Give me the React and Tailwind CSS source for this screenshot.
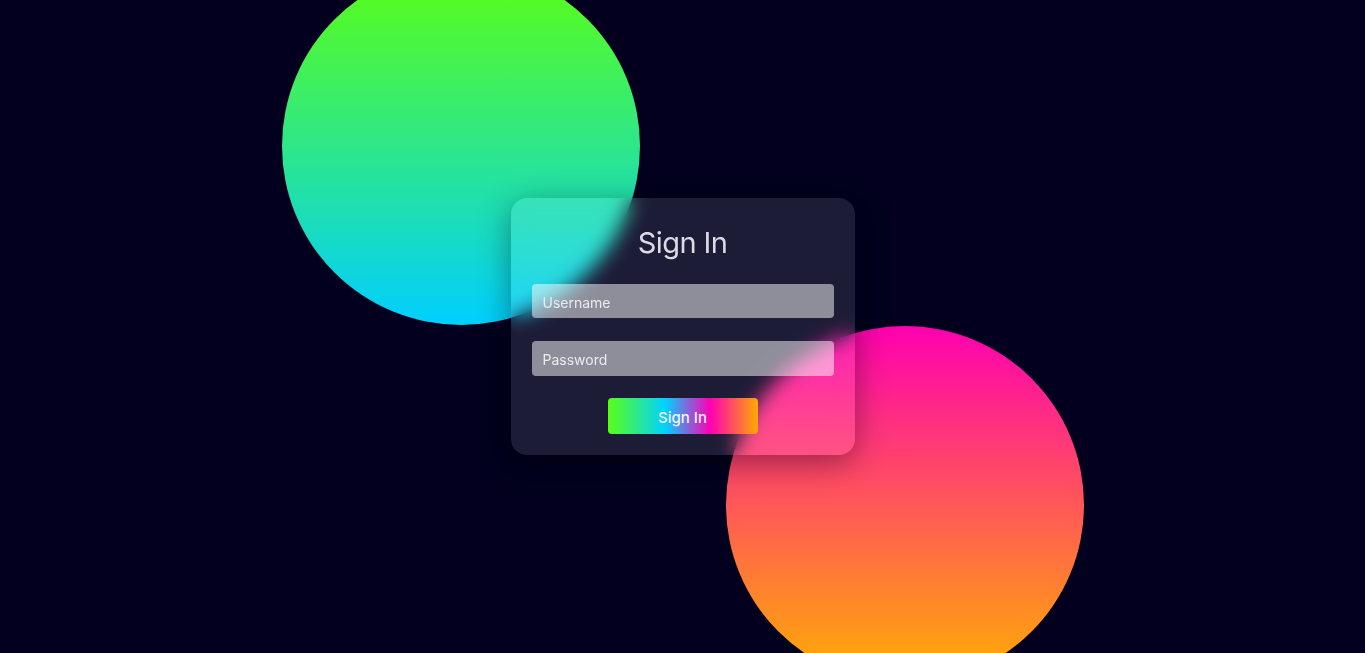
import { useState } from 'react';

export default function App() {
  const [username, setUsername] = useState('');
  const [password, setPassword] = useState('');

  return (
    <div className="relative w-full min-h-[653px] h-screen overflow-hidden bg-[#02001e] flex items-center justify-center font-['Inter','Noto_Sans',sans-serif]">
      {/* decorative circles */}
      <div className="absolute left-[282px] top-[-33px] w-[358px] h-[358px] rounded-full bg-[linear-gradient(#5cff12,#00cfff)]"></div>
      <div className="absolute left-[726px] top-[326px] w-[358px] h-[358px] rounded-full bg-[linear-gradient(#ff00b0,#ffb000)]"></div>

      <div className="relative z-10 w-[344px] rounded-[16px] bg-white/[0.11] backdrop-blur-[10px] shadow-[0_8px_32px_rgba(0,0,0,0.4)] px-[21px] pt-[26px] pb-[21px] flex flex-col items-center">
        <h2 className="text-[29px] leading-[36px] font-normal text-[#dcdbe4] tracking-[-0.6px] translate-y-[1px]">Sign In</h2>
        <input
          type="text"
          value={username}
          onChange={e => setUsername(e.target.value)}
          placeholder="Username"
          className="mt-[24px] w-full h-[34px] rounded-[4px] bg-white/50 px-[11px] pt-[2px] text-[14px] text-white placeholder:text-[#ebeaf0] outline-none"
        />
        <input
          type="password"
          value={password}
          onChange={e => setPassword(e.target.value)}
          placeholder="Password"
          className="mt-[23px] w-full h-[35px] rounded-[4px] bg-white/50 px-[11px] pt-[2px] text-[14px] text-white placeholder:text-[#ebeaf0] outline-none"
        />
        <button
          type="submit"
          className="mt-[22px] w-[150px] h-[36px] rounded-[4px] pt-[4px] bg-[linear-gradient(to_right,#5aff15,#00d2ff_38%,#ff00b4_68%,#ffab00)] text-[15px] font-medium text-[#f4f4f8]"
        >
          Sign In
        </button>
      </div>
    </div>
  );
}
